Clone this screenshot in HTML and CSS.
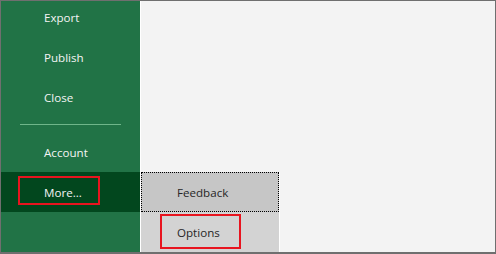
FILE: index.html
```html
<!DOCTYPE html>
<html>
<head>
<meta charset="utf-8">
<link rel="stylesheet" href="styles.css">
</head>
<body>
<div class="frame">
  <nav class="sidebar">
    <div class="item">Export</div>
    <div class="item">Publish</div>
    <div class="item">Close</div>
    <div class="sep"></div>
    <div class="item">Account</div>
    <div class="item selected">More...</div>
  </nav>
  <main class="content"></main>
  <div class="flyout">
    <div class="fitem focused">Feedback</div>
    <div class="fitem light">Options</div>
  </div>
  <div class="mark mark-more"></div>
  <div class="mark mark-options"></div>
</div>
</body>
</html>
```
FILE: styles.css
```css
html, body {
  margin: 0;
  padding: 0;
}
body {
  font-family: "Open Sans", "Noto Sans", sans-serif;
  font-size: 11.6px;
}
.frame {
  position: relative;
  width: 496px;
  height: 254px;
  box-sizing: border-box;
  border: 1px solid #6f6f6f;
  border-bottom-width: 2px;
  display: flex;
  overflow: hidden;
}
.sidebar {
  width: 139px;
  flex: none;
  background: #217346;
  display: flex;
  flex-direction: column;
  margin-top: -4px;
}
.item {
  height: 40px;
  flex: none;
  display: flex;
  align-items: center;
  padding-left: 43px;
  padding-top: 1px;
  box-sizing: border-box;
  color: #f4f4f4;
}
.item.selected {
  background: #02471e;
}
.sep {
  height: 1px;
  background: #6fb68a;
  margin: 7px 19px 7px 19px;
  flex: none;
}
.content {
  flex: 1;
  background: #f3f3f3;
  border-left: 1px solid #ffffff;
}
.flyout {
  position: absolute;
  left: 140px;
  top: 171px;
  width: 138px;
  bottom: 0;
  border-right: 1px solid #ffffff;
  background: #d3d3d3;
  display: flex;
  flex-direction: column;
}
.fitem {
  height: 40px;
  box-sizing: border-box;
  display: flex;
  align-items: center;
  padding-left: 36px;
  padding-top: 1px;
  color: #262626;
}
.fitem.focused {
  background: #c6c6c6;
  border: 1px dotted #000000;
  padding-left: 35px;
}
.mark {
  position: absolute;
  border: 2px solid #e8141f;
  box-sizing: border-box;
}
.mark-more {
  left: 17px;
  top: 175px;
  width: 82px;
  height: 29px;
}
.mark-options {
  left: 159px;
  top: 213px;
  width: 81px;
  height: 35px;
}
```
